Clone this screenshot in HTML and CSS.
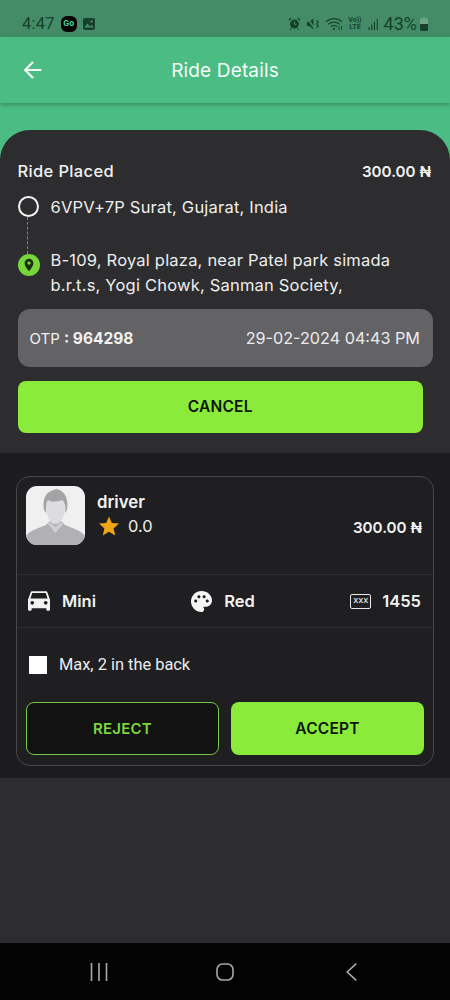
FILE: index.html
```html
<!DOCTYPE html>
<html lang="en">
<head>
<meta charset="utf-8">
<title>Ride Details</title>
<link rel="stylesheet" href="styles.css">
</head>
<body>
<div class="screen">
  <div class="statusbar">
    <div class="status-left">
      <span class="clock">4:47</span>
      <span class="app-go">Go</span>
      <svg class="ic-gallery" viewBox="0 0 14 14"><rect x="1" y="1" width="12" height="12" rx="2" fill="#17412c"/><circle cx="9.6" cy="4.4" r="1.2" fill="#438c67"/><path d="M2.4 10.6 5.4 6.6 8 9.4 9.4 8 11.6 10.6Z" fill="#438c67"/></svg>
    </div>
    <div class="status-right">
      <svg class="ic-alarm" viewBox="0 0 14 14"><circle cx="7" cy="7.6" r="4.8" fill="#17412c"/><path d="M1 3.6 3.4 1.4M13 3.6 10.6 1.4M3.6 12.6l-1 1M10.4 12.6l1 1" stroke="#17412c" stroke-width="1.4"/><path d="M7 5v3h2" stroke="#438c67" fill="none"/></svg>
      <svg class="ic-mute" viewBox="0 0 14 14"><path d="M1 5h2.4L7.4 1.6v10.8L3.4 9H1Z" fill="#17412c"/><path d="M1.4 1.6 9.4 12.4" stroke="#438c67" stroke-width="1.6"/><path d="M10.4 3.4 12.4 5 10.4 7 12.4 9 10.4 10.8" stroke="#17412c" fill="none" stroke-width="1.1"/></svg>
      <svg class="ic-wifi" viewBox="0 0 19 14"><path d="M1 5.4C5.6 1 12.4 1 17 5.4M3.4 7.8C6.6 4.8 11.4 4.8 14.6 7.8M5.8 10.2C7.6 8.6 10.4 8.6 12.2 10.2" fill="none" stroke="#17412c" stroke-width="1.2"/><circle cx="9" cy="12.4" r="1.1" fill="#17412c"/><path d="M14 9.5v4M16.5 13.5v-4" stroke="#17412c" stroke-width=".9"/></svg>
      <span class="lte">Vo))<br>LTE</span>
      <svg class="ic-signal" viewBox="0 0 12 13"><path d="M1 10h1.4v3H1ZM4 7.4h1.4V13H4ZM7 4.2h1.2V13H7ZM10 1h1.2v12H10Z" fill="#17412c"/></svg>
      <span class="battery-text">43%</span>
      <svg class="ic-battery" viewBox="0 0 8 14"><path d="M2.6 0h2.8v1.4H2.6Z" fill="#6fa487"/><rect y="1.4" width="8" height="12.6" rx="1.2" fill="#6fa487"/><path d="M0 7h8v5.8A1.2 1.2 0 0 1 6.800 14H1.200A1.200 1.200 0 0 1 0 12.800Z" fill="#17412c"/></svg>
    </div>
  </div>

  <header class="appbar">
    <svg class="ic-back" viewBox="0 0 20 20"><path d="M18.500 10H2.500M10 2 2.200 10 10 18" fill="none" stroke="#f4fbf7" stroke-width="2.200"/></svg>
    <h1 class="appbar-title">Ride Details</h1>
  </header>

  <div class="green-gap">
    <main class="sheet">
      <section class="trip">
        <div class="trip-head">
          <span class="status-label">Ride Placed</span>
          <span class="fare">300.00 ₦</span>
        </div>
        <div class="stops">
          <div class="stop stop-from">
            <span class="dot-origin"></span>
            <span class="stop-text">6VPV+7P Surat, Gujarat, India</span>
          </div>
          <div class="stop stop-to">
            <span class="dot-dest">
              <svg class="ic-pin" viewBox="0 0 12 14"><path d="M6 .8A4.400 4.400 0 0 0 1.600 5.200C1.600 8.400 6 13.200 6 13.200S10.400 8.400 10.400 5.200A4.400 4.400 0 0 0 6 .8ZM6 6.800A1.700 1.700 0 1 1 6 3.400 1.700 1.700 0 0 1 6 6.800Z" fill="#1d2b12"/></svg>
            </span>
            <span class="stop-text">B-109, Royal plaza, near Patel park simada b.r.t.s, Yogi Chowk, Sanman Society,</span>
          </div>
        </div>
        <div class="otp-box">
          <span class="otp">OTP <b>: 964298</b></span>
          <span class="otp-date">29-02-2024 04:43 PM</span>
        </div>
        <button class="btn btn-primary btn-cancel">CANCEL</button>
      </section>

      <section class="offers">
        <div class="card">
          <div class="driver-row">
            <div class="avatar">
              <svg viewBox="0 0 59 59"><rect width="59" height="59" fill="#f0f0f1"/><path d="M0 59V50C4 44 13 42 20 39L24 35H35L39 39C46 42 55 44 59 50V59Z" fill="#b1b1b3"/><path d="M20 20C19 10 23 6 30 6 36 6 40 10 39 20 39 30 35 38 29.500 38 24 38 20 30 20 20Z" fill="#dddddf"/><path d="M18 24C16 12 20 5 31 3 38 5 43 11 41 24L39 27C40 20 39 16 36 14 31 16 25 16 22 14 20 16 20 20 20 27Z" fill="#a4a4a6"/><path d="M22 38 29.500 47 37 38 35 36 29.500 41 24 36Z" fill="#cfcfd1"/></svg>
            </div>
            <div class="driver-info">
              <div class="driver-name">driver</div>
              <div class="rating">
                <svg class="ic-star" viewBox="0 0 24 24"><path d="M12 1.500 15.100 8.700 22.900 9.400 17 14.600 18.800 22.300 12 18.200 5.200 22.300 7 14.600 1.100 9.400 8.900 8.700Z" fill="#f0a416"/></svg>
                <span class="rating-value">0.0</span>
              </div>
            </div>
            <div class="driver-fare">300.00 ₦</div>
          </div>
          <div class="specs">
            <div class="spec">
              <svg class="ic-car" viewBox="3 5 18 16"><path d="M18.920 6.010C18.720 5.420 18.160 5 17.500 5h-11c-.66 0-1.210.42-1.420 1.010L3 12v8c0 .55.45 1 1 1h1c.55 0 1-.45 1-1v-1h12v1c0 .55.45 1 1 1h1c.55 0 1-.45 1-1v-8l-2.080-5.990zM6.500 16c-.83 0-1.500-.67-1.500-1.500S5.670 13 6.500 13s1.500.67 1.500 1.500S7.330 16 6.500 16zm11 0c-.83 0-1.500-.67-1.500-1.500s.67-1.500 1.500-1.500 1.500.67 1.500 1.500-.67 1.500-1.500 1.500zM5 11l1.500-4.500h11L19 11H5z" fill="#f2f2f2"/></svg>
              <span>Mini</span>
            </div>
            <div class="spec">
              <svg class="ic-palette" viewBox="2 2 20 20"><path d="M12 2C6.490 2 2 6.490 2 12s4.490 10 10 10c1.380 0 2.500-1.120 2.500-2.500 0-.61-.23-1.200-.64-1.670-.08-.1-.13-.21-.13-.33 0-.28.22-.5.5-.5H16c3.310 0 6-2.690 6-6 0-4.960-4.490-9-10-9zM6.500 13C5.670 13 5 12.330 5 11.500S5.670 10 6.500 10 8 10.670 8 11.500 7.330 13 6.500 13zm3-4C8.670 9 8 8.330 8 7.500S8.670 6 9.500 6s1.500.67 1.500 1.500S10.330 9 9.500 9zm5 0c-.83 0-1.500-.67-1.500-1.500S13.670 6 14.500 6s1.500.67 1.500 1.500S15.330 9 14.500 9zm3 4c-.83 0-1.500-.67-1.500-1.500s.67-1.500 1.500-1.500 1.500.67 1.500 1.500-.67 1.500-1.500 1.500z" fill="#f5f5f5"/></svg>
              <span>Red</span>
            </div>
            <div class="spec">
              <span class="plate">xxx</span>
              <span>1455</span>
            </div>
          </div>
          <label class="note">
            <span class="checkbox"></span>
            <span class="note-text">Max, 2 in the back</span>
          </label>
          <div class="actions">
            <button class="btn btn-outline">REJECT</button>
            <button class="btn btn-primary">ACCEPT</button>
          </div>
        </div>
      </section>
    </main>
  </div>

  <nav class="navbar">
    <svg class="ic-recents" viewBox="0 0 18 18"><path d="M1.500 0v18M9 0v18M16.500 0v18" stroke="#a9a9ab" stroke-width="1.600"/></svg>
    <svg class="ic-home" viewBox="0 0 18 18"><rect x="1" y="1" width="16" height="16" rx="5.500" fill="none" stroke="#a9a9ab" stroke-width="1.600"/></svg>
    <svg class="ic-navback" viewBox="0 0 11 18"><path d="M10.300.6 1.200 9 10.300 17.400" fill="none" stroke="#a9a9ab" stroke-width="1.600"/></svg>
  </nav>
</div>
</body>
</html>
```

FILE: styles.css
```css
* { box-sizing: border-box; }
html, body { margin: 0; padding: 0; }
body { width: 450px; height: 1000px; overflow: hidden; font-family: "Inter", "Liberation Sans", sans-serif; color: #f2f2f2; }
.screen { width: 450px; height: 1000px; display: flex; flex-direction: column; background: #4cbc85; }

.statusbar { height: 37px; flex: none; background: #438c67; display: flex; justify-content: space-between; align-items: center; padding: 10px 22px 0 22px; color: #17412c; }
.status-left, .status-right { display: flex; align-items: center; }
.clock { font-family: "Roboto", sans-serif; font-size: 16.500px; letter-spacing: .2px; margin-right: 6px; }
.app-go { width: 16px; height: 16px; border-radius: 6px; background: #050505; color: #4fd6a0; font-family: "Inter", sans-serif; font-weight: 700; font-size: 8px; line-height: 15px; text-align: center; margin-right: 5px; }
.ic-gallery { width: 14px; height: 14px; }
.ic-alarm { width: 13px; height: 13px; margin-right: 5px; }
.ic-mute { width: 14px; height: 14px; margin-right: 5px; }
.ic-wifi { width: 19px; height: 15px; margin-right: 4px; }
.lte { font-family: "Roboto", sans-serif; font-size: 7px; line-height: 7px; font-weight: 700; text-align: center; margin-right: 5px; }
.ic-signal { width: 12px; height: 12px; margin-right: 5px; }
.battery-text { font-family: "Roboto", sans-serif; font-size: 18px; margin-right: 3px; }
.ic-battery { width: 8px; height: 14px; }

.appbar { height: 66px; flex: none; display: flex; align-items: center; justify-content: center; position: relative; z-index: 1; background: #4cbc85; box-shadow: 0 2px 4px rgba(40, 100, 70, .55); }
.ic-back { position: absolute; left: 23px; top: 23px; width: 20px; height: 20px; }
.appbar-title { margin: 0; font-size: 19px; font-weight: 400; color: #f4fbf7; letter-spacing: .15px; }

.green-gap { flex: 1; min-height: 0; padding-top: 27px; display: flex; }
.sheet { flex: 1; background: #2d2d2f; border-radius: 30px 30px 0 0; display: flex; flex-direction: column; }

.trip { height: 323px; flex: none; padding: 31px 17px 0 17.500px; }
.trip-head { display: flex; justify-content: space-between; align-items: center; height: 20px; }
.status-label { font-size: 16.500px; font-weight: 500; letter-spacing: .35px; }
.fare { font-size: 15.200px; font-weight: 600; padding-right: 2px; }

.stops { margin-top: 14px; position: relative; height: 95px; }
.stop { display: flex; position: absolute; left: 0; right: 0; }
.stop-from { top: 0; }
.stop-to { top: 53px; }
.stop-text { line-height: 25px; margin-left: 11px; flex: 1; color: #eeeeee; font-size: 16.500px; letter-spacing: .2px; }
.dot-origin { width: 21px; height: 21px; flex: none; border-radius: 50%; border: 2.500px solid #f4f4f4; margin: 1px 1px 0 0; position: relative; }
.dot-origin::after { content: ""; position: absolute; left: 7px; top: 19px; height: 37px; border-left: 1.500px dashed #808083; }
.dot-dest { width: 22px; height: 22px; flex: none; border-radius: 50%; background: #76d63a; margin-top: 6px; display: flex; align-items: center; justify-content: center; }
.ic-pin { width: 12px; height: 14px; }

.otp-box { margin-top: 19px; width: 415.500px; height: 58px; background: #636265; border-radius: 12px; display: flex; justify-content: space-between; align-items: center; padding: 0 13px 0 12px; }
.otp { font-size: 15px; }
.otp b { font-weight: 700; font-size: 15.500px; }
.otp-date { font-size: 16.200px; color: #ececec; }

.btn { border: 0; font-family: inherit; font-weight: 600; font-size: 15.500px; letter-spacing: .2px; border-radius: 8px; padding: 0 0 1px; }
.btn-primary { background: #8aeb3a; color: #0d140a; }
.btn-outline { background: #121212; color: #7ed63c; border: 1.500px solid #76c847; font-size: 15px; }
.btn-cancel { display: block; width: 405.500px; height: 52px; margin-top: 14px; }

.offers { height: 325px; flex: none; background: #1c1c1e; padding: 23px 16px 0; }
.card { height: 290px; border: 1px solid #48484a; border-radius: 14px; background: #1f1f21; }
.driver-row { height: 98px; padding: 9px 11px 0 9px; display: flex; border-bottom: 1px solid #2e2e30; }
.avatar { width: 59px; height: 59px; flex: none; border-radius: 11px; overflow: hidden; }
.avatar svg { display: block; width: 59px; height: 59px; }
.driver-info { margin-left: 12px; flex: 1; }
.driver-name { font-size: 16.800px; font-weight: 600; line-height: 18px; margin-top: 7px; }
.rating { display: flex; align-items: center; margin-top: 4px; padding-left: 1px; }
.ic-star { width: 22px; height: 22px; }
.rating-value { font-size: 16.400px; margin-left: 8px; color: #efefef; }
.driver-fare { font-size: 15.200px; font-weight: 600; align-self: flex-start; margin-top: 32px; }

.specs { height: 53px; display: flex; justify-content: space-between; align-items: center; padding: 0 12px 0 11px; border-bottom: 1px solid #2e2e30; }
.spec { display: flex; align-items: center; gap: 12px; font-size: 16.500px; font-weight: 600; }
.ic-car { width: 22px; height: 20px; }
.ic-palette { width: 21px; height: 21px; }
.plate { width: 21px; height: 15px; border: 1.500px solid #e8e8e8; border-radius: 2px; font-size: 9px; font-weight: 500; line-height: 9px; text-align: center; color: #e8e8e8; margin-right: -1px; }

.note { height: 74px; display: flex; align-items: center; padding: 0 0 0 12px; }
.checkbox { width: 18px; height: 18px; background: #fff; flex: none; }
.note-text { margin: 0 0 1px 12px; font-family: "Roboto", sans-serif; font-size: 16.400px; color: #ececec; }

.actions { display: flex; justify-content: space-between; padding: 0 9px 0 9px; }
.actions .btn { width: 193px; height: 53px; }
.actions .btn-outline { height: 53px; }

.navbar { height: 57px; flex: none; background: #030304; position: relative; }
.ic-recents { position: absolute; left: 90px; top: 20px; width: 18px; height: 18px; }
.ic-home { position: absolute; left: 216px; top: 20px; width: 18px; height: 18px; }
.ic-navback { position: absolute; left: 346px; top: 20px; width: 11px; height: 18px; }
```
